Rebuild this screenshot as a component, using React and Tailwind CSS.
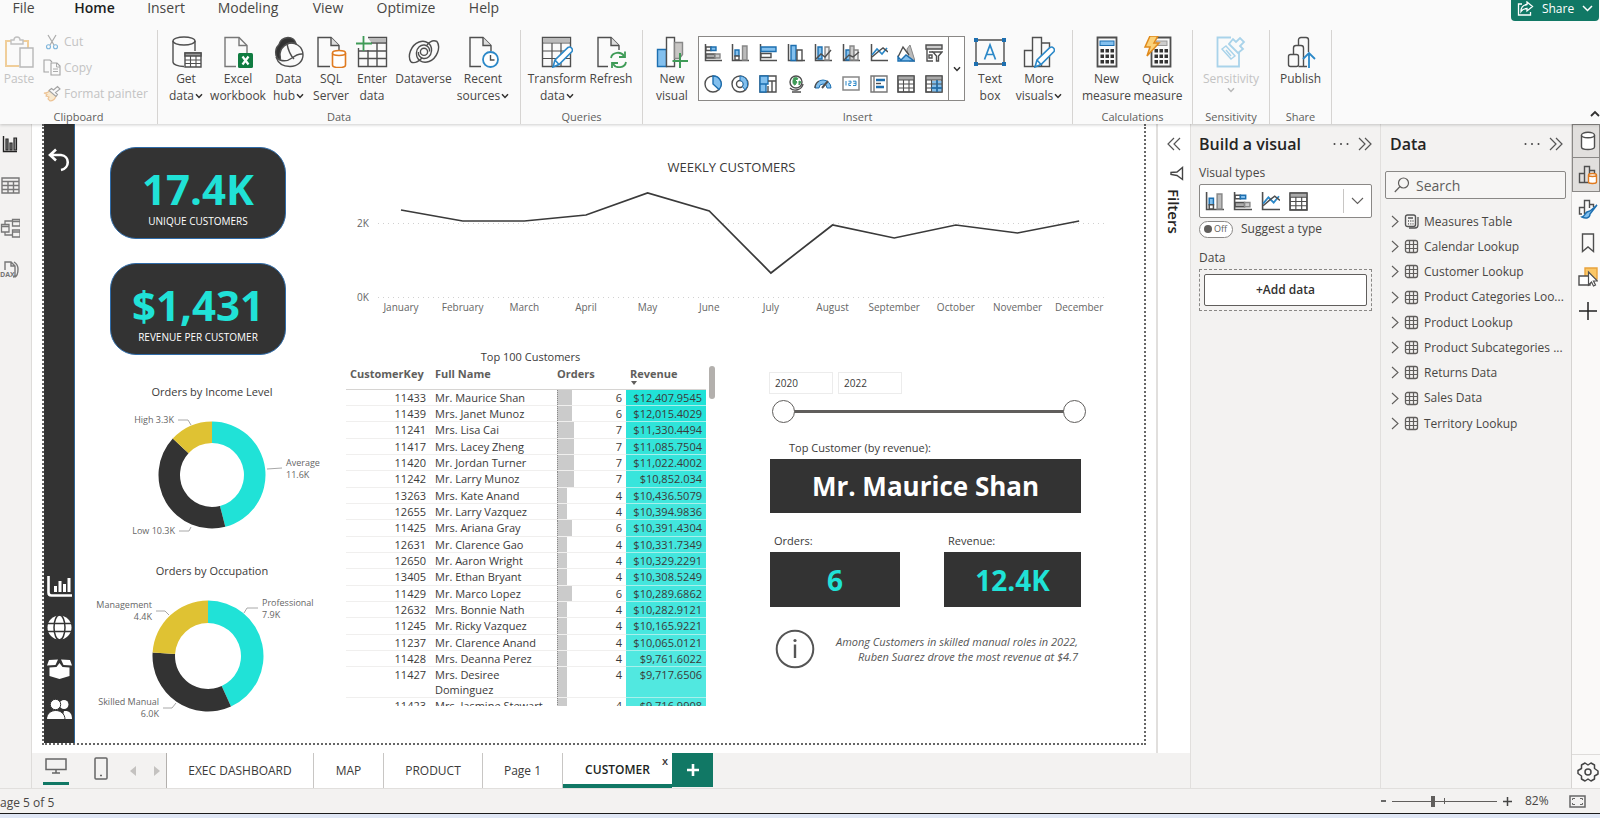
import React from "react";

const DARK = "#4f4f4f";
const BLUE = "#2b88c8";
const SKY = "#83c0ee";
const GREEN = "#3f9b57";

function Svg({ size, w, h, vb, children, className = "" }) {
  const ww = w || size;
  const hh = h || size;
  return (
    <svg width={ww} height={hh} viewBox={vb || `0 0 ${ww} ${hh}`} fill="none" stroke={DARK} strokeWidth="1.4" className={`shrink-0 ${className}`} aria-hidden="true">
      {children}
    </svg>
  );
}

function Caret({ color = "#323130" }) {
  return (
    <svg width="8" height="6" viewBox="0 0 8 6" fill="none" stroke={color} strokeWidth="1.5" className="inline shrink-0" aria-hidden="true">
      <path d="M1 1.2 4 4.4 7 1.2" />
    </svg>
  );
}

/* ---------- ribbon icons, 32 x 32 ---------- */
const PasteIcon = () => (
  <Svg size={32} className="opacity-50">
    <path d="M8 5H3v25h13M20 5h5v7" stroke="#e8a33d" strokeWidth="2" />
    <path d="M8 8V4h3c0-4 6-4 6 0h3v4z" stroke="#888" />
    <path d="M17 12h13v19H17z" fill="#fafafa" stroke="#777" />
  </Svg>
);
const CutIcon = () => (
  <Svg size={16} className="opacity-60">
    <path d="M4 1l6 10M12 1 6 11" stroke="#777" strokeWidth="1.2" />
    <circle cx="4.5" cy="12.8" r="2" stroke={BLUE} strokeWidth="1.1" />
    <circle cx="11.5" cy="12.8" r="2" stroke={BLUE} strokeWidth="1.1" />
  </Svg>
);
const CopyIcon = () => (
  <Svg w={18} h={17} className="opacity-50">
    <path d="M6 13H1V1h6l2 2M8 4h6l3 3v9H8z" strokeWidth="1.1" />
    <path d="M13.500 4v4H17M10 10h5M10 12.500h5" strokeWidth=".9" />
  </Svg>
);
const PainterIcon = () => (
  <Svg w={18} h={17} className="opacity-50">
    <path d="M1 8c3 0 5-1 6-3l6 6c-1 3-3 5-6 5L5 14l1-2-3-1 1-1.500z" fill="#f8d9a6" stroke="#e08a2c" strokeWidth="1.1" />
    <path d="M6 5.500l7 6 1.500-2-2-2L17 4l-2.500-2.500L10.500 5 8.500 3.500z" fill="#fafafa" strokeWidth="1.1" />
  </Svg>
);
const GetDataIcon = () => (
  <Svg size={32}>
    <ellipse cx="14" cy="5" rx="11" ry="4" />
    <path d="M3 5v21c0 2.500 5 4.500 11 4.500M25 5v10" />
    <path d="M15 17h16v14H15z" fill="#fff" />
    <path d="M15 17h16v3H15z" fill="#999" />
    <path d="M15 24h16M15 27.500h16M20.500 20v11M26 20v11" strokeWidth="1.100" />
  </Svg>
);
const ExcelIcon = () => (
  <Svg size={32}>
    <path d="M14 30.500H3V1.500h14l8 8V17" stroke="#777" />
    <path d="M17 1.500v8h8" stroke="#777" />
    <rect x="16" y="17" width="15" height="15" rx="1.500" fill="#107c41" stroke="none" />
    <path d="M20.500 20.500l6 8M26.500 20.500l-6 8" stroke="#fff" strokeWidth="2.200" />
  </Svg>
);
const HubIcon = () => (
  <Svg size={32}>
    <path d="M15 1.500c-5 .5-8 3-9 7-3 3-4 7-3 11 .5 2 2 3.500 4 4.500 1-2 0-3 0-6 .5-5 3-8 7-10 3-1.500 6-1.500 9-.5-1-3.500-4-6-8-6z" fill="#333" />
    <path d="M14 8c7-3 16 2 16 11 0 6-5 11.500-13 11.500C10 30.500 5 27 3 21" />
    <path d="M14 8c1 5 3 11 7 15M7 24c4 1.500 8 1 12-2 3-2.500 6-4.500 11-4" />
  </Svg>
);
const SqlIcon = () => (
  <Svg size={32}>
    <path d="M15 30.500H3V1.500h13l8 8V14" />
    <path d="M16 1.500v8h8" fill="#ddd" />
    <path d="M17.500 17v12c0 3.400 13 3.400 13 0V17" fill="#fff" stroke="#e07b20" strokeWidth="1.600" />
    <ellipse cx="24" cy="17" rx="6.500" ry="2.500" fill="#fff" stroke="#e07b20" strokeWidth="1.600" />
  </Svg>
);
const EnterIcon = () => (
  <Svg size={32}>
    <path d="M2.500 12v18.500h28v-29H12" />
    <path d="M12 2h18v4H15z" fill="#bbb" stroke="none" />
    <path d="M15 7h15.500M2.500 15h28M2.500 22.500h28M12 14v16.500M21 7v23.500" />
    <path d="M7.500 0v15M0 7.500h16" stroke={GREEN} strokeWidth="1.800" />
  </Svg>
);
const DataverseIcon = () => (
  <Svg size={32}>
    <path d="M3 26C-1 20 3 9 11 6c7-2.500 13 2 12.500 9-.5 5-4 8-8 7.500-3.500-.5-5.500-3.500-5-6.500" />
    <path d="M3 26c4 2 9-2 11-4M29 5.500c4 6 0 17-8 20-7 2.500-13-2-12.500-9 .5-5 4-8 8-7.500 3.500.5 5.500 3.500 5 6.500" />
    <path d="M29 5.500c-4-2-8 1-10 3.500" />
    <circle cx="16" cy="15.800" r="3.600" />
  </Svg>
);
const RecentIcon = () => (
  <Svg size={32}>
    <path d="M14 30.500H3V1.500h13l8 8V15" />
    <path d="M16 1.500v8h8" fill="#ddd" />
    <circle cx="23.500" cy="23.500" r="7.500" fill="#fff" stroke={BLUE} strokeWidth="1.800" />
    <path d="M23.500 19v5h4" />
  </Svg>
);
const Pencil = () => (
  <path d="M12 31l2-7 13-12.500c2.500-1.500 5.500 1.500 4 4L18 28.500z M14 24l4 4.500" fill="#fff" stroke={BLUE} strokeWidth="1.600" />
);
const TransformIcon = () => (
  <Svg size={32}>
    <path d="M1.500 1.500h28v29h-28z" />
    <path d="M2 2h27v4H2z" fill="#bbb" stroke="none" />
    <path d="M1.500 7h28M1.500 15h28M1.500 22.500h28M11 7v23M20 7v23" strokeWidth="1.200" />
    <Pencil />
  </Svg>
);
const RefreshIcon = () => (
  <Svg size={32}>
    <path d="M13 30.500H3V1.500h13l8 8V14" />
    <path d="M16 1.500v8h8" fill="#ddd" />
    <path d="M16 22c1-6 10-7 13-2M31 26c-1 6-10 7-13 2" stroke={GREEN} strokeWidth="1.800" />
    <path d="M30 15.500v5.500h-6M17 32v-5h6" stroke={GREEN} strokeWidth="1.800" />
  </Svg>
);
const NewVisualIcon = () => (
  <Svg size={32}>
    <path d="M1.500 13.500h9v17h-9z" fill={SKY} stroke="#1d6fb0" />
    <path d="M10.500 1.500h8v29h-8z" fill="#fff" />
    <path d="M18.500 6.500h8v12l-3 4h-5z" fill="#c8c6c4" stroke="#888" />
    <path d="M24 17v15M16.500 25H32" stroke={GREEN} strokeWidth="2" />
  </Svg>
);
const TextBoxIcon = () => (
  <Svg size={34}>
    <path d="M3 5h28v24H3z" />
    <path d="M1 3h4v4H1zM29 3h4v4h-4zM1 27h4v4H1zM29 27h4v4h-4z" fill="#1d6fb0" stroke="none" />
    <path d="M11.500 24.500 17 10l5.500 14.500M13.500 19.500h7" stroke={BLUE} strokeWidth="1.700" />
  </Svg>
);
const MoreIcon = () => (
  <Svg size={32}>
    <path d="M1.500 14.500h8v16h-8zM9.500 1.500h9v29h-9zM18.500 7h8v23.500h-8z" fill="#fafafa" />
    <Pencil />
  </Svg>
);
const keys = [0, 1, 2].flatMap((r) => [0, 1, 2].map((c) => [c, r]));
const CalcIcon = ({ bolt }) => (
  <Svg size={32}>
    <path d={bolt ? "M9.500 1.500h19v29h-19z" : "M6.500 1.500h19v29h-19z"} strokeWidth="1.800" />
    <rect x={bolt ? 14 : 9} y="5" width={bolt ? 11 : 14} height="4.500" fill={bolt ? "#ccc" : SKY} stroke={bolt ? "#999" : "#1d6fb0"} strokeWidth="1" />
    {keys.map(([c, r]) => (
      <rect key={`${c}${r}`} x={(bolt ? 12.500 : 9.500) + c * 5} y={13 + r * 5.500} width="3.500" height="3.500" fill="#333" stroke="none" />
    ))}
    {bolt && <path d="M8 0h8l-4 7h5L5 20l3-9H3z" fill="#fbd27a" stroke="#e08a1c" strokeWidth="1.500" />}
  </Svg>
);
const SensitivityIcon = () => (
  <Svg size={32}>
    <path d="M16 1.500H2.500v29H24V16" stroke="#a9d3ea" strokeWidth="1.800" />
    <path d="M7 13l4-3 9 10-4 3z" stroke="#a9d3ea" />
    <path d="M14 8l9 9 5-4-3-3 4-4-4-4-4 4-3-3z" fill="#fafafa" stroke="#a9d3ea" strokeWidth="1.800" />
    <path d="M11 14l5 6" stroke="#a9d3ea" />
  </Svg>
);
const PublishIcon = () => (
  <Svg size={32}>
    <rect x="3.500" y="18.500" width="10" height="12" rx="2" />
    <path d="M8.500 18v-6c0-1.500 1-2.500 2.500-2.500h5c1.500 0 2.500 1 2.500 2.500v18.500h-5" />
    <path d="M13.500 9V4c0-1.500 1-2.500 2.500-2.500h5c1.500 0 2.500 1 2.500 2.500v12M19 30.500h3" />
    <path d="M24 32V17M18 23l6-6 6 6" stroke={BLUE} strokeWidth="1.800" />
  </Svg>
);

/* ---------- gallery icons, 18 x 18 ---------- */
const Axis = () => <path d="M1.500 0v16.500H18" strokeWidth="1.500" />;
const StackBar = () => (<><Axis /><path d="M2 3h5v3.500H2z" fill="#fff" /><path d="M7 3h5v3.500H7z" fill={SKY} stroke="#1d6fb0" /><path d="M2 10h9v4H2z" fill="#aaa" /><path d="M11 10h5v4h-5z" fill="#ccc" stroke="#888" /></>);
const StackCol = () => (<><Axis /><path d="M4 6h4v6H4z" fill={SKY} stroke="#1d6fb0" /><path d="M4 12h4v4H4z" fill="#fff" /><path d="M11.500 2h4.500v14h-4.500z" fill="#bbb" stroke="#888" /></>);
const ClusterBar = () => (<><Axis /><path d="M2 3h15v4.500H2z" fill={SKY} stroke="#1d6fb0" /><path d="M2 9.500h10v4H2z" fill="#fff" /></>);
const ClusterCol = () => (<><Axis /><path d="M4 1.500h5v15H4z" fill={SKY} stroke="#1d6fb0" /><path d="M10 6h5v10.500h-5z" fill="#fff" /></>);
const Combo = () => (<><Axis /><path d="M4 3h4v12H4z" fill={SKY} stroke="#1d6fb0" /><path d="M11 3h4v13h-4z" fill="#eee" stroke="#888" /><path d="M2 15l5-5 4 3 6-7" /></>);
const Combo2 = () => (<><Axis /><path d="M4 6h4v10H4z" fill={SKY} stroke="#1d6fb0" /><path d="M8 2h4v14H8z" fill="#ccc" stroke="#888" /><path d="M12 6h4v10h-4z" fill="#eee" stroke="#888" /><path d="M2 16l5-5 4 2 6-5" /></>);
const Line = () => (<><Axis /><path d="M2 11l5-6 5 5 5-6" stroke={BLUE} strokeWidth="1.700" /><path d="M2 13l7-6 4-3 5 4" /></>);
const Area = () => (<><path d="M10 5l3-4 5 16h-6z" fill="#bbb" stroke="#888" strokeWidth="1" /><path d="M1 13l5-10 6 8" fill="#fff" /><path d="M1 17v-4l3 3 5-5 8 6z" fill={SKY} stroke="#1d6fb0" /></>);
const Filt = () => (<><path d="M1 1h16v4H1z" fill="#ccc" /><path d="M2 5v12h6M4 8h4M4 11h3v3H4z" /><path d="M8 8h9l-3.500 4v5h-2v-5z" fill="#fff" /></>);
const Pie = () => (<><circle cx="9" cy="9" r="8" fill="#fff" /><path d="M9 1a8 8 0 0 1 6 13.500L9 9z" fill={SKY} stroke="#1d6fb0" /></>);
const Donut = () => (<><circle cx="9" cy="9" r="8" /><circle cx="9" cy="9" r="3.500" /><path d="M9 1a8 8 0 0 1 5 14l-2.500-3.500A3.800 3.800 0 0 0 9 5.500z" fill={SKY} stroke="#1d6fb0" strokeWidth="1" /></>);
const Tree = () => (<><path d="M1 1h16v16H1z" fill="#fff" /><path d="M1 1h8v8H1zM1 9h6v8H1z" fill={SKY} stroke="#1d6fb0" /><path d="M9 6h8M13 6v11M9 11v6" /></>);
const GlobeMap = () => (<><circle cx="9" cy="7" r="6" fill="#fff" /><path d="M7 3c2-1 4 0 4 1L8 5l2 2-2 3c-2 0-3-4-1-7zM12 6l2 1-2 3z" fill={GREEN} stroke={GREEN} strokeWidth="1" /><path d="M3 13c4 4 12 2 13-4M5 17h9" /></>);
const Gauge = () => (<><path d="M1 13a8 8 0 0 1 16 0h-4a4 4 0 0 0-8 0z" fill={SKY} stroke="#1d6fb0" strokeWidth="1" /><path d="M1 13a8 8 0 0 1 4-7" /><path d="M8 13l6-7" strokeWidth="2" /></>);
const Card = () => (<><path d="M1 2h16v13H1z" fill="#fff" stroke="#888" strokeWidth="1.500" /><path d="M4 6v4.500M6.500 6.200h2.500v2H6.800v2.300H9M11 6.200h3v4.300h-3M11.500 8.300H14" stroke={BLUE} strokeWidth="1" /></>);
const Slicer = () => (<><path d="M1 1h16v16H1zM4 1v16" fill="#fff" stroke="#777" /><path d="M6 5h9M6 12h8" stroke="#1d6fb0" strokeWidth="2.500" /><path d="M6 8.500h5" /></>);
const TableG = ({ hot }) => (<><path d="M1 1h16v16H1z" fill="#fff" />{hot && <path d="M7 6h10v11H7z" fill={SKY} stroke="none" />}<path d="M1 1h16v4H1z" fill="#aaa" stroke="none" /><path d="M1 1h16v16H1zM1 5h16M1 9h16M1 13h16M6.500 5v12M12 5v12" strokeWidth="1.100" />{hot && <path d="M12 5v12M6 13h11" stroke="#1d6fb0" />}</>);

const gallery = [
  ["Stacked bar chart", StackBar], ["Stacked column chart", StackCol], ["Clustered bar chart", ClusterBar],
  ["Clustered column chart", ClusterCol], ["Line and stacked column chart", Combo], ["Line and clustered column chart", Combo2],
  ["Line chart", Line], ["Area chart", Area], ["Slicer filter", Filt],
  ["Pie chart", Pie], ["Donut chart", Donut], ["Treemap", Tree], ["Map", GlobeMap], ["Gauge", Gauge],
  ["Card", Card], ["Multi-row card", Slicer], ["Table", TableG], ["Matrix", () => <TableG hot />],
];

/* ---------- ribbon ---------- */
function RibbonButton({ icon, lines, width, caret, disabled }) {
  return (
    <button type="button" disabled={disabled} className={`flex shrink-0 flex-col items-center text-[12px] leading-[17px] whitespace-nowrap ${width} ${disabled ? "text-[#c3c3c3]" : "text-[#484644]"}`}>
      <span className="flex h-[37px] items-center">{icon}</span>
      <span className="block">{lines[0]}</span>
      <span className="flex items-center gap-px">
        {lines[1]}
        {caret && <Caret color={disabled ? "#b8b8b8" : "#323130"} />}
      </span>
    </button>
  );
}

function Group({ label, width, pad = "", children }) {
  return (
    <section aria-label={label} className={`flex shrink-0 flex-col items-center border-r border-[#d6d4d2] ${width}`}>
      <div className={`flex h-20 w-full justify-center pt-[3px] ${pad}`}>{children}</div>
      <span className="text-[11px] leading-[14px] text-[#605e5c]">{label}</span>
    </section>
  );
}

const menu = [
  ["File", "w-[47px]"], ["Home", "w-[95px]"], ["Insert", "w-[48px]"], ["Modeling", "w-[116px]"],
  ["View", "w-[44px]"], ["Optimize", "w-[112px]"], ["Help", "w-[44px]"],
];

function Ribbon() {
  return (
    <header className="relative z-10 h-[124px] shrink-0 bg-[#fafafa] shadow-[0_1px_3px_rgba(0,0,0,0.2)]">
      <div className="flex h-[30px] items-start justify-between">
        <nav aria-label="Ribbon tabs" className="flex text-[14px] leading-[16px] text-[#484644]">
          {menu.map(([m, w]) => (
            <button key={m} type="button" className={`flex justify-center whitespace-nowrap ${w} ${m === "Home" ? "font-semibold text-[#201f1e]" : ""}`}>{m}</button>
          ))}
        </nav>
        <button type="button" className="mr-px flex h-[21px] w-[88px] items-center justify-center gap-2 rounded-b bg-[#117865] pb-1 text-[12px] text-white">
          <Svg w={17} h={15} className="text-white">
            <path d="M5 3H1.500v11h12v-3M10 1l5.500 4.500L10 10V7.500c-3 0-4.500.5-6 3 0-4 2-6.500 6-7z" stroke="#fff" strokeWidth="1.300" />
          </Svg>
          Share
          <svg width="11" height="7" viewBox="0 0 11 7" fill="none" stroke="#fff" strokeWidth="1.500" aria-hidden="true"><path d="M1 1l4.500 4.500L10 1" /></svg>
        </button>
      </div>
      <div className="flex h-[94px]">
        <Group label="Clipboard" width="w-[158px]" pad="pr-2">
          <div className="flex w-full gap-2 pl-[3px]">
            <RibbonButton icon={<PasteIcon />} lines={["Paste"]} width="w-[32px]" disabled />
            <div className="flex flex-col gap-[9px] pt-px text-[12px] leading-[16px] text-[#c3c3c3]">
              <button type="button" disabled className="flex items-center gap-[3px]"><span className="flex w-[18px] justify-center"><CutIcon /></span>Cut</button>
              <button type="button" disabled className="flex items-center gap-[3px]"><CopyIcon />Copy</button>
              <button type="button" disabled className="flex items-center gap-[3px] whitespace-nowrap"><PainterIcon />Format painter</button>
            </div>
          </div>
        </Group>
        <Group label="Data" width="w-[363px]" pad="pr-1">
          <RibbonButton icon={<GetDataIcon />} lines={["Get", "data"]} caret width="w-[50px]" />
          <RibbonButton icon={<ExcelIcon />} lines={["Excel", "workbook"]} width="w-[54px]" />
          <RibbonButton icon={<HubIcon />} lines={["Data", "hub"]} caret width="w-[47px]" />
          <RibbonButton icon={<SqlIcon />} lines={["SQL", "Server"]} width="w-[38px]" />
          <RibbonButton icon={<EnterIcon />} lines={["Enter", "data"]} width="w-[44px]" />
          <RibbonButton icon={<DataverseIcon />} lines={["Dataverse"]} width="w-[59px]" />
          <RibbonButton icon={<RecentIcon />} lines={["Recent", "sources"]} caret width="w-[60px]" />
        </Group>
        <Group label="Queries" width="w-[122px]" pad="pr-[3px]">
          <RibbonButton icon={<TransformIcon />} lines={["Transform", "data"]} caret width="w-[62px]" />
          <RibbonButton icon={<RefreshIcon />} lines={["Refresh"]} width="w-[46px]" />
        </Group>
        <Group label="Insert" width="w-[430px]" pad="pr-[6px]">
          <RibbonButton icon={<NewVisualIcon />} lines={["New", "visual"]} width="w-[52px]" />
          <div className="mt-[3px] flex h-[65px] w-[267px] shrink-0 border border-[#8a8886] bg-white">
            <div className="grid flex-1 grid-cols-9 items-center justify-items-center">
              {gallery.map(([name, G]) => (
                <button key={name} type="button" aria-label={name}><Svg size={18}><G /></Svg></button>
              ))}
            </div>
            <button type="button" aria-label="More visual types" className="flex w-4 items-center justify-center border-l border-[#8a8886]"><Caret /></button>
          </div>
          <RibbonButton icon={<TextBoxIcon />} lines={["Text", "box"]} width="w-[50px]" />
          <RibbonButton icon={<MoreIcon />} lines={["More", "visuals"]} caret width="w-[48px]" />
        </Group>
        <Group label="Calculations" width="w-[120px]">
          <RibbonButton icon={<CalcIcon />} lines={["New", "measure"]} width="w-[51px]" />
          <RibbonButton icon={<CalcIcon bolt />} lines={["Quick", "measure"]} width="w-[52px]" />
        </Group>
        <Group label="Sensitivity" width="w-[77px]">
          <RibbonButton icon={<SensitivityIcon />} lines={["Sensitivity"]} caret disabled width="w-[60px]" />
        </Group>
        <Group label="Share" width="w-[62px]">
          <RibbonButton icon={<PublishIcon />} lines={["Publish"]} width="w-[46px]" />
        </Group>
        <button type="button" aria-label="Collapse the ribbon" className="ml-auto flex items-end pb-1">
          <svg width="10" height="12" viewBox="0 0 10 12" fill="none" stroke="#323130" strokeWidth="1.800" aria-hidden="true"><path d="M1 8l4-4 4 4" /></svg>
        </button>
      </div>
    </header>
  );
}

/* ---------- view switcher ---------- */
function ViewRail() {
  return (
    <nav aria-label="Views" className="flex w-8 shrink-0 flex-col items-start gap-[22px] border-r border-[#dedcda] bg-[#f3f2f1] pt-[10px]">
      <button type="button" aria-label="Report view"><Svg size={20}><path d="M3.500 2v15.500H17" stroke="#222" /><path d="M6 5h2v11H6zM10 9h2v7h-2zM14 4h2.500v12H14z" fill="#999" stroke="#222" strokeWidth="1.200" /></Svg></button>
      <button type="button" aria-label="Table view"><Svg size={20}><path d="M2 2h17v15H2zM2 5.500h17M2 9.500h17M2 13.500h17M8 5.500V17M13.500 5.500V17" stroke="#777" /></Svg></button>
      <button type="button" aria-label="Model view"><Svg size={20}><path d="M1.500 6.500H9V14H1.500zM12.500 1.500H20V8h-7.500zM12.500 12H20v7h-7.500zM1.500 8.500H9M12.500 3.500H20M12.500 14H20M5 6.500V3h7.500M5 14v3h7.500" stroke="#777" strokeWidth="1.300" /></Svg></button>
      <button type="button" aria-label="DAX query view">
        <svg width="20" height="20" viewBox="0 0 20 20" fill="none" stroke="#777" strokeWidth="1.400" aria-hidden="true">
          <path d="M5 10V2h6l4 4v9c0 2-1 2-2 2M11 2v4h4M14 2c3 2 4 4 4 7 0 5-1 7-3 8" />
          <text x="0" y="17" fontSize="7" fontWeight="700" fill="#777" stroke="none">DAX</text>
        </svg>
      </button>
    </nav>
  );
}

/* ---------- report page ---------- */
function PageNav() {
  return (
    <nav aria-label="Report pages" className="flex w-[31px] shrink-0 flex-col items-center gap-4 border-r border-[#2d6496] bg-[#333333] pt-6 pb-[21px]">
      <button type="button" aria-label="Back" className="mb-auto">
        <Svg w={22} h={24}><path d="M8 1.500 2 7l6 5.500M2.500 7H13c9 1 9 13 0 15" stroke="#fff" strokeWidth="2.600" /></Svg>
      </button>
      <button type="button" aria-label="Executive dashboard">
        <Svg size={25}><path d="M1.500 2v16.500c0 2 .5 3 3 3H25" stroke="#fff" strokeWidth="2.600" /><path d="M8.500 18v-6M13 18V7M17.500 18v-8M22 18V4" stroke="#fff" strokeWidth="3" /></Svg>
      </button>
      <button type="button" aria-label="Map">
        <Svg size={25}><circle cx="12.500" cy="12.500" r="12" fill="#fff" stroke="none" /><ellipse cx="12.500" cy="12.500" rx="5.500" ry="12.500" stroke="#333" strokeWidth="1.500" /><path d="M0 8.500h25M0 16.500h25" stroke="#333" strokeWidth="1.500" /></Svg>
      </button>
      <button type="button" aria-label="Product">
        <Svg size={25}><path d="M2 4l9-.5L8.500 9 0 9.500zM23 4l-9-.5L16.500 9l8.500.5zM2.500 11.500l7-.5 3-4 3 4 7 .5V20l-10 3-10-3z" fill="#fff" stroke="none" /></Svg>
      </button>
      <button type="button" aria-label="Customer">
        <Svg size={25}><g fill="#fff" stroke="none"><circle cx="17" cy="7.500" r="4.500" /><path d="M15 22h10c0-6-3-8.500-8-8z" /></g><g fill="#fff" stroke="#333" strokeWidth="1"><circle cx="8.500" cy="7.500" r="5.200" /><path d="M-.5 22.500h18.500c0-12-18.500-12-18.500 0z" /></g></Svg>
      </button>
    </nav>
  );
}

function Kpi({ value, label }) {
  return (
    <div className="ml-[18px] flex h-[92px] w-[176px] flex-col items-center justify-center rounded-[26px] border border-[#2f6ba8] bg-[#333333] pt-[10px]">
      <span className="text-[42px] leading-[46px] font-bold text-[#20e2d7]">{value}</span>
      <span className="text-[10px] leading-[18px] text-white">{label}</span>
    </div>
  );
}

function arc(cx, cy, R, r, a0, a1) {
  const p = (rad, a) => `${(cx + rad * Math.sin(a * 2 * Math.PI)).toFixed(2)} ${(cy - rad * Math.cos(a * 2 * Math.PI)).toFixed(2)}`;
  const big = a1 - a0 > 0.5 ? 1 : 0;
  return `M${p(R, a0)}A${R} ${R} 0 ${big} 1 ${p(R, a1)}L${p(r, a1)}A${r} ${r} 0 ${big} 0 ${p(r, a0)}Z`;
}

function DonutChart({ title, cx, cy, R, r, parts, leaders, labels, height }) {
  let at = 0;
  return (
    <figure>
      <figcaption className="w-60 text-center text-[11px] leading-[18px] text-[#3b3a39]">{title}</figcaption>
      <svg width="240" height={height} viewBox={`0 0 240 ${height}`} className="block" role="img" aria-label={title}>
        {parts.map(([v, color]) => {
          const d = arc(cx, cy, R, r, at, at + v);
          at += v;
          return <path key={color} d={d} fill={color} />;
        })}
        {leaders.map((d) => <path key={d} d={d} fill="none" stroke="#a8a8a8" />)}
        {labels.map(([t, x, y, anchor]) => (
          <text key={t} x={x} y={y} textAnchor={anchor} fontSize="9" fill="#666">{t}</text>
        ))}
      </svg>
    </figure>
  );
}

const months = ["January", "February", "March", "April", "May", "June", "July", "August", "September", "October", "November", "December"];
const weekly = [49, 60, 60, 54, 32, 50, 112, 64, 77, 64, 72, 60];

function WeeklyChart() {
  return (
    <figure className="pt-[35px]">
      <figcaption className="pr-[18px] text-center text-[13px] leading-[16px] text-[#3b3a39]">WEEKLY CUSTOMERS</figcaption>
      <svg viewBox="0 0 807 156" className="block w-full" role="img" aria-label="Weekly customers by month">
        <path d="M41 48.500h726M41 122.500h726" stroke="#d0d0d0" strokeDasharray="1 4" />
        <text x="20" y="52" fontSize="10" fill="#666">2K</text>
        <text x="20" y="126" fontSize="10" fill="#666">0K</text>
        <polyline fill="none" stroke="#3a3a3a" strokeWidth="1.700" points={weekly.map((y, i) => `${64 + i * 61.650},${y - 14}`).join(" ")} />
        {months.map((m, i) => <text key={m} x={64 + i * 61.650} y="136" fontSize="10" textAnchor="middle" fill="#666">{m}</text>)}
      </svg>
    </figure>
  );
}

const rows = [
  [11433, "Mr. Maurice Shan", 6, "$12,407.9545", "bg-[#20e2d7]"],
  [11439, "Mrs. Janet Munoz", 6, "$12,015.4029", "bg-[#24e2d8]"],
  [11241, "Mrs. Lisa Cai", 7, "$11,330.4494", "bg-[#2fe4da]"],
  [11417, "Mrs. Lacey Zheng", 7, "$11,085.7504", "bg-[#33e4da]"],
  [11420, "Mr. Jordan Turner", 7, "$11,022.4002", "bg-[#35e4db]"],
  [11242, "Mr. Larry Munoz", 7, "$10,852.034", "bg-[#38e5dc]"],
  [13263, "Mrs. Kate Anand", 4, "$10,436.5079", "bg-[#41e6dd]"],
  [12655, "Mr. Larry Vazquez", 4, "$10,394.9836", "bg-[#42e6dd]"],
  [11425, "Mrs. Ariana Gray", 6, "$10,391.4304", "bg-[#42e6dd]"],
  [12631, "Mr. Clarence Gao", 4, "$10,331.7349", "bg-[#43e6de]"],
  [12650, "Mr. Aaron Wright", 4, "$10,329.2291", "bg-[#43e6de]"],
  [13405, "Mr. Ethan Bryant", 4, "$10,308.5249", "bg-[#44e6de]"],
  [11429, "Mr. Marco Lopez", 6, "$10,289.6862", "bg-[#44e6de]"],
  [12632, "Mrs. Bonnie Nath", 4, "$10,282.9121", "bg-[#44e6de]"],
  [11245, "Mr. Ricky Vazquez", 4, "$10,165.9221", "bg-[#47e7df]"],
  [11237, "Mr. Clarence Anand", 4, "$10,065.0121", "bg-[#49e7df]"],
  [11428, "Mrs. Deanna Perez", 4, "$9,761.6022", "bg-[#50e8e0]"],
  [11427, "Mrs. Desiree Dominguez", 4, "$9,717.6506", "bg-[#51e8e0]"],
  [11423, "Mrs. Jasmine Stewart", 4, "$9,716.9908", "bg-[#51e8e0]"],
];
const barWidth = { 4: "w-[10px]", 6: "w-[15px]", 7: "w-[17px]" };

function TopCustomers() {
  return (
    <div className="w-[369px] shrink-0 pt-[3px]">
      <h2 className="text-center text-[11px] leading-[18px] text-[#3b3a39]">Top 100 Customers</h2>
      <div className="flex justify-between">
        <div className="h-[340px] overflow-hidden">
          <table className="w-[360px] table-fixed border-separate border-spacing-0 text-[11px] leading-[15px] text-[#3b3a39]">
            <colgroup><col className="w-[84px]" /><col className="w-[127px]" /><col className="w-[69px]" /><col className="w-[80px]" /></colgroup>
            <thead>
              <tr className="h-6 text-left align-top text-[#605e5c]">
                <th className="border-b border-[#d6d4d2] pl-1 font-bold whitespace-nowrap">CustomerKey</th>
                <th className="border-b border-[#d6d4d2] pl-[5px] font-bold">Full Name</th>
                <th className="border-b border-[#d6d4d2] font-bold">Orders</th>
                <th className="border-b border-[#d6d4d2] pl-1 font-bold">
                  Revenue
                  <svg width="8" height="4" viewBox="0 0 8 4" className="block" aria-hidden="true"><path d="M1 0h6L4 4z" fill="#605e5c" /></svg>
                </th>
              </tr>
            </thead>
            <tbody>
              {rows.map(([key, name, orders, revenue, bg]) => (
                <tr key={key} className="h-4 align-top nth-[3n]:h-[17px]">
                  <td className="border-b border-[#f0efee] pr-1 text-right">{key}</td>
                  <td className="border-b border-[#f0efee] pr-3 pl-[5px]">{name}</td>
                  <td className="relative border-b border-[#f0efee] pr-1 text-right">
                    <span className={`absolute inset-y-0 left-0 border-l border-dotted border-[#888] bg-[#cbcbcb] ${barWidth[orders]}`} />
                    {orders}
                  </td>
                  <td className={`border-b border-[#a8f0eb] pr-1 text-right ${bg}`}>{revenue}</td>
                </tr>
              ))}
            </tbody>
          </table>
        </div>
        <div className="h-[33px] w-[6px] rounded-full bg-[#b3b0ad]" />
      </div>
    </div>
  );
}

const rangeThumb = "pointer-events-none col-start-1 row-start-1 m-0 h-6 w-full appearance-none bg-transparent [&::-webkit-slider-thumb]:pointer-events-auto [&::-webkit-slider-thumb]:size-[23px] [&::-webkit-slider-thumb]:appearance-none [&::-webkit-slider-thumb]:rounded-full [&::-webkit-slider-thumb]:border [&::-webkit-slider-thumb]:border-[#605e5c] [&::-webkit-slider-thumb]:bg-white";

function Details() {
  return (
    <div className="w-[317px] shrink-0 pt-[27px] text-[#3b3a39]">
      <div className="flex gap-[5px]">
        <input aria-label="Start year" defaultValue="2020" className="h-[22px] w-16 border border-[#ececec] bg-white pl-[5px] text-[10px]" />
        <input aria-label="End year" defaultValue="2022" className="h-[22px] w-16 border border-[#ececec] bg-white pl-[5px] text-[10px]" />
      </div>
      <div className="mt-[5px] ml-[3px] grid items-center">
        <div className="col-start-1 row-start-1 mx-3 h-[3px] bg-[#605e5c]" />
        <input type="range" aria-label="From year" min="2020" max="2022" defaultValue="2020" className={rangeThumb} />
        <input type="range" aria-label="To year" min="2020" max="2022" defaultValue="2022" className={rangeThumb} />
      </div>
      <div className="mr-[5px] ml-px">
        <p className="mt-4 ml-[19px] text-[11px] leading-[18px]">Top Customer (by revenue):</p>
        <div className="mt-[2px] flex h-[54px] items-center justify-center bg-[#333333] text-[26px] font-bold text-white">Mr. Maurice Shan</div>
        <div className="mt-[19px] flex justify-between">
          <div className="w-[130px]">
            <p className="ml-1 text-[11px] leading-[18px]">Orders:</p>
            <div className="mt-[2px] flex h-[55px] items-center justify-center bg-[#333333] text-[28px] font-bold text-[#20e2d7]">6</div>
          </div>
          <div className="w-[137px]">
            <p className="ml-1 text-[11px] leading-[18px]">Revenue:</p>
            <div className="mt-[2px] flex h-[55px] items-center justify-center bg-[#333333] text-[28px] font-bold text-[#20e2d7]">12.4K</div>
          </div>
        </div>
        <div className="mt-[22px] flex items-center gap-2 pl-[5px]">
          <Svg size={40}><circle cx="20" cy="20" r="18.300" stroke="#555" strokeWidth="2" /><path d="M20 15.500V29" stroke="#555" strokeWidth="2.400" /><circle cx="20" cy="11.500" r="1.600" fill="#555" stroke="none" /></Svg>
          <p className="flex-1 pr-[3px] text-right text-[11px] leading-[15px] whitespace-nowrap text-[#555] italic">Among Customers in skilled manual roles in 2022,<br />Ruben Suarez drove the most revenue at $4.7</p>
        </div>
      </div>
    </div>
  );
}

function Report() {
  return (
    <div className="flex flex-1 bg-white px-[10px] pb-2">
      <div className="flex flex-1 border-x-2 border-b-2 border-dotted border-[#666]">
        <PageNav />
        <div className="w-[262px] shrink-0 pt-[23px] pl-[17px]">
          <div className="flex flex-col gap-6 pb-7">
            <Kpi value="17.4K" label="UNIQUE CUSTOMERS" />
            <Kpi value="$1,431" label="REVENUE PER CUSTOMER" />
          </div>
          <DonutChart
            title="Orders by Income Level" cx={120} cy={74} R={53.5} r={32} height={161}
            parts={[[0.46, "#20e2d7"], [0.409, "#333333"], [0.131, "#dfc233"]]}
            leaders={["M86 19h10l3 5", "M175 68l15-1", "M87 130h10l2-4"]}
            labels={[["High 3.3K", 82, 22, "end"], ["Average", 194, 65, "start"], ["11.6K", 194, 77, "start"], ["Low 10.3K", 83, 133, "end"]]}
          />
          <DonutChart
            title="Orders by Occupation" cx={116} cy={76} R={55.5} r={33} height={150}
            parts={[[0.432, "#20e2d7"], [0.328, "#333333"], [0.24, "#dfc233"]]}
            leaders={["M64 31h9l4 4", "M152 33l3-5h11", "M71 128h9l4-5"]}
            labels={[["Management", 60, 28, "end"], ["4.4K", 60, 40, "end"], ["Professional", 170, 26, "start"], ["7.9K", 170, 38, "start"], ["Skilled Manual", 67, 125, "end"], ["6.0K", 67, 137, "end"]]}
          />
        </div>
        <div className="flex min-w-0 flex-1 flex-col">
          <WeeklyChart />
          <div className="mt-[14px] flex gap-[54px] pl-[9px]">
            <TopCustomers />
            <Details />
          </div>
        </div>
      </div>
    </div>
  );
}

function PageTabs() {
  const tab = "flex items-center justify-center border-r border-[#c8c6c4] bg-white whitespace-nowrap";
  return (
    <div className="flex h-[35px] bg-[#f3f2f1] text-[12px] text-[#3b3a39]">
      <div className="flex w-[135px] items-center border-r border-[#b3b0ad] pl-[11px]">
        <button type="button" aria-label="Desktop layout" className="flex h-8 w-[26px] flex-col items-center justify-between self-start border-b-[3px] border-[#117865] pt-[5px]">
          <Svg w={22} h={16}><path d="M1 1h20v10.500H1zM11 12v2.500M7 15h8" stroke="#666" strokeWidth="1.500" /></Svg>
        </button>
        <button type="button" aria-label="Mobile layout" className="mb-1 ml-[25px]"><Svg w={14} h={23}><rect x="1" y="1" width="12" height="21" rx="1" stroke="#666" strokeWidth="1.500" /><path d="M6 18.500h2" stroke="#666" /></Svg></button>
        <button type="button" aria-label="Previous page" className="ml-[22px]"><Svg w={6} h={10}><path d="M6 0v10L0 5z" fill="#c4c2c0" stroke="none" /></Svg></button>
        <button type="button" aria-label="Next page" className="ml-[18px]"><Svg w={6} h={10}><path d="M0 0v10l6-5z" fill="#c4c2c0" stroke="none" /></Svg></button>
      </div>
      <button type="button" className={`w-[147px] ${tab}`}>EXEC DASHBOARD</button>
      <button type="button" className={`w-[70px] ${tab}`}>MAP</button>
      <button type="button" className={`w-[99px] ${tab}`}>PRODUCT</button>
      <button type="button" className={`w-[80px] ${tab}`}>Page 1</button>
      <div className="relative flex w-[109px] border-b-4 border-[#117865] bg-white">
        <button type="button" className="flex-1 pt-[2px] font-semibold text-[#201f1e]">CUSTOMER</button>
        <button type="button" aria-label="Delete page" className="absolute top-0 right-1 text-[11px] leading-[16px] font-semibold">x</button>
      </div>
      <button type="button" aria-label="New page" className="flex h-[34px] w-[41px] items-center justify-center bg-[#117865]">
        <Svg size={12}><path d="M6 0v12M0 6h12" stroke="#fff" strokeWidth="2.600" /></Svg>
      </button>
    </div>
  );
}

/* ---------- right-hand panes ---------- */
const Double = ({ flip }) => (
  <Svg w={14} h={14}><path d={flip ? "M7 1 1 7l6 6M13 1 7 7l6 6" : "M1 1l6 6-6 6M7 1l6 6-6 6"} stroke="#555" strokeWidth="1.200" /></Svg>
);

function PaneHead({ title }) {
  return (
    <div className="flex h-10 items-center gap-[9px]">
      <h2 className="mr-auto text-[16px] font-semibold whitespace-nowrap text-[#252423]">{title}</h2>
      <button type="button" aria-label={`${title} options`}><Svg w={16} h={4}><g fill="#444" stroke="none"><circle cx="1.500" cy="2" r="1" /><circle cx="8" cy="2" r="1" /><circle cx="14.500" cy="2" r="1" /></g></Svg></button>
      <button type="button" aria-label={`Collapse ${title}`}><Double /></button>
    </div>
  );
}

function FiltersPane() {
  return (
    <aside className="flex w-[34px] shrink-0 flex-col items-center border-l-2 border-[#e1dfdd] bg-white pt-[13px]">
      <button type="button" aria-label="Expand filters"><Double flip /></button>
      <Svg size={15} className="mt-[15px] ml-1"><path d="M13.500 1.500v12L8 9.500 2 8.500v-2L8 6z" stroke="#444" /></Svg>
      <h2 className="mt-2 text-[15px] leading-[20px] font-semibold text-[#252423] [writing-mode:vertical-rl]">Filters</h2>
    </aside>
  );
}

function BuildPane() {
  return (
    <aside className="w-[190px] shrink-0 border-l border-[#e1dfdd] bg-[#f3f2f1] pr-2 pl-2 text-[12px] text-[#484644]">
      <PaneHead title="Build a visual" />
      <p className="pb-[3px] leading-[17px]">Visual types</p>
      <div className="flex h-[34px] items-center gap-[9px] rounded-xs border border-[#8a8886] bg-white pl-[5px]">
        {[StackCol, StackBar, Line, TableG].map((G, i) => (
          <Svg key={i} w={19} h={19} vb="0 0 18 18"><G /></Svg>
        ))}
        <button type="button" aria-label="Choose visual type" className="ml-auto flex h-6 w-7 items-center justify-center border-l border-[#c8c6c4]">
          <Svg w={13} h={8}><path d="M1 1l5.500 5.500L12 1" stroke="#605e5c" strokeWidth="1.100" /></Svg>
        </button>
      </div>
      <label className="mt-[2px] flex items-center gap-2">
        <span className="flex h-[17px] w-[34px] items-center gap-[2px] rounded-full border border-[#8a8886] bg-white pl-1 text-[9px] text-[#605e5c]">
          <input type="checkbox" className="size-2 appearance-none rounded-full bg-[#605e5c]" />
          Off
        </span>
        Suggest a type
      </label>
      <p className="mt-[11px] leading-[18px]">Data</p>
      <div className="mt-[2px] border border-dashed border-[#8a8886] p-1">
        <button type="button" className="h-8 w-full rounded-xs border border-[#605e5c] bg-white font-semibold text-[#323130]">+Add data</button>
      </div>
    </aside>
  );
}

const tables = ["Measures Table", "Calendar Lookup", "Customer Lookup", "Product Categories Lookup", "Product Lookup", "Product Subcategories Lookup", "Returns Data", "Sales Data", "Territory Lookup"];
const shown = { "Product Categories Lookup": "Product Categories Loo...", "Product Subcategories Lookup": "Product Subcategories ..." };

function DataPane() {
  return (
    <aside className="w-[191px] shrink-0 border-l border-[#e1dfdd] bg-[#f3f2f1] pr-[5px] pl-1 text-[#484644]">
      <div className="pr-[3px] pl-[5px]"><PaneHead title="Data" /></div>
      <label className="mt-[7px] flex h-7 items-center gap-[6px] rounded-xs border border-[#8a8886] bg-[#f6f5f4] pl-2">
        <Svg size={16}><circle cx="9.500" cy="6" r="5" stroke="#605e5c" strokeWidth="1.200" /><path d="M6 9.500.800 15" stroke="#605e5c" strokeWidth="1.200" /></Svg>
        <input type="search" placeholder="Search" aria-label="Search" className="w-full min-w-0 bg-transparent text-[14px] outline-none placeholder:text-[#605e5c]" />
      </label>
      <ul className="mt-[10px] text-[12px]">
        {tables.map((t, i) => (
          <li key={t} className="flex h-[25px] items-center pl-[6px] nth-[4n]:h-[26px]">
            <button type="button" aria-label={`Expand ${t}`}><Svg w={8} h={13}><path d="M1 1l6 5.500L1 12" stroke="#605e5c" strokeWidth="1.100" /></Svg></button>
            <Svg size={15} className="mx-[5px]">
              {i === 0 ? (
                <><rect x="1.500" y="1" width="10" height="11.500" rx="2" stroke="#555" /><path d="M14 3v8c0 2-1 3-3 3H5M4 4h5M4 7h1M6.300 7h1M8.500 7h1M4 9.800h1M6.300 9.800h1M8.500 9.800h1" stroke="#555" strokeWidth="1.300" /></>
              ) : (
                <><rect x="1.500" y="1.500" width="12" height="12" rx="2" stroke="#605e5c" strokeWidth="1.300" /><path d="M5.500 1.500v12M9.500 1.500v12M1.500 5.500h12M1.500 9.500h12" stroke="#605e5c" strokeWidth="1.200" /></>
              )}
            </Svg>
            <span className="whitespace-nowrap">{shown[t] || t}</span>
          </li>
        ))}
      </ul>
    </aside>
  );
}

function ToolRail() {
  const b = "flex h-[34px] w-full items-center justify-center pl-1";
  return (
    <nav aria-label="Panes" className="flex w-[29px] shrink-0 flex-col items-center border-l border-[#d6d4d2] bg-[#faf9f8]">
      <button type="button" aria-label="Data" className={`${b} border border-[#8a8886] bg-[#e1dfdd]`}>
        <Svg w={16} h={20}><path d="M1.500 4v12c0 3.300 13 3.300 13 0V4" fill="#fff" /><ellipse cx="8" cy="4" rx="6.500" ry="2.700" fill="#fff" /></Svg>
      </button>
      <button type="button" aria-label="Build" className={`${b} border border-t-0 border-[#8a8886] bg-[#e1dfdd]`}>
        <Svg size={20}><path d="M1.500 8.500h5v9h-5zM6.500 1.500h5v16h-5zM11.500 5.500h5V9" /><path d="M10.500 10v7c0 2 8 2 8 0v-7c0-2-8-2-8 0s8 2 8 0" fill="#fff" stroke="#e07b20" /></Svg>
      </button>
      <button type="button" aria-label="Format" className={b}>
        <Svg size={20}><path d="M4 15H1.500V8.500h5V15M6.500 12V1.500h5V9M11.500 5.500h4V8" /><path d="M19 6l-7 6-3 1c-2 1-2 4-5 5 4 2 8 1 8-3z" fill={SKY} stroke="#1d6fb0" /></Svg>
      </button>
      <button type="button" aria-label="Bookmarks" className={b}><Svg w={14} h={20}><path d="M1.500 1h11v17.500L7 14l-5.500 4.500z" /></Svg></button>
      <button type="button" aria-label="Selection" className={b}>
        <Svg size={20}><path d="M7 1h12v11H7z" fill="#fbc766" stroke="#e8a33d" /><path d="M1 9h11v9H1z" fill="#fff" /><path d="M10.500 5v13l3-3 2 4 2-1-2-4h4z" fill="#fff" strokeWidth="1.200" /></Svg>
      </button>
      <button type="button" aria-label="Add pane" className={b}><Svg size={20}><path d="M10 1v18M1 10h18" stroke="#222" strokeWidth="1.500" /></Svg></button>
      <button type="button" aria-label="Settings" className="mt-auto flex h-[34px] w-full items-center justify-center border-t border-[#dedcda] pl-1">
        <Svg size={22}><path d="M8 2l3 2 3-2 3.500 2v3.500L21 10v3l-3.500 2v3L14 20l-3-2-3 2-3.500-2v-3L1 12.500v-3l3.500-2V4z" stroke="#444" strokeWidth="1.500" strokeLinejoin="round" /><circle cx="11" cy="11" r="3" stroke="#444" strokeWidth="1.500" /></Svg>
      </button>
    </nav>
  );
}

function StatusBar() {
  return (
    <footer className="shrink-0">
      <div className="flex h-[25px] items-center border-t border-[#e1dfdd] bg-[#f3f2f1] text-[12px] text-[#484644]">
        <span className="mt-1">age 5 of 5</span>
        <div className="ml-auto flex items-center">
          <button type="button" aria-label="Zoom out"><Svg w={5} h={12}><path d="M0 6h5" stroke="#444" strokeWidth="1.600" /></Svg></button>
          <div className="ml-[6px] grid items-center">
            <div className="col-start-1 row-start-1 h-px bg-[#605e5c]" />
            <div className="col-start-1 row-start-1 ml-[52px] h-[6px] w-px bg-[#605e5c]" />
            <input type="range" aria-label="Zoom level" min="0" max="100" defaultValue="39" className="col-start-1 row-start-1 m-0 h-3 w-[105px] appearance-none bg-transparent [&::-webkit-slider-thumb]:h-[11px] [&::-webkit-slider-thumb]:w-1 [&::-webkit-slider-thumb]:appearance-none [&::-webkit-slider-thumb]:bg-[#605e5c]" />
          </div>
          <button type="button" aria-label="Zoom in" className="ml-[6px]"><Svg size={9}><path d="M0 4.500h9M4.500 0v9" stroke="#444" strokeWidth="1.500" /></Svg></button>
          <span className="ml-[13px] w-7">82%</span>
          <button type="button" aria-label="Fit to page" className="mr-[14px] ml-4"><Svg w={17} h={13}><path d="M1 1h15v11H1z" stroke="#666" strokeWidth="1.500" /><path d="M3.500 5V3.500H6M11 3.500h2.500V5M3.500 8v1.500H6M11 9.500h2.500V8" stroke="#666" strokeWidth="1" /></Svg></button>
        </div>
      </div>
      <div className="h-[5px] border-t border-[#1b1b1b] bg-[#dfe6f5]" />
    </footer>
  );
}

export default function App() {
  return (
    <div className="flex min-h-screen flex-col overflow-hidden bg-white font-['Open_Sans','Noto_Sans',sans-serif]">
      <Ribbon />
      <main className="flex flex-1">
        <ViewRail />
        <div className="flex min-w-0 flex-1 flex-col">
          <div className="flex flex-1">
            <Report />
            <FiltersPane />
          </div>
          <PageTabs />
        </div>
        <BuildPane />
        <DataPane />
        <ToolRail />
      </main>
      <StatusBar />
    </div>
  );
}
